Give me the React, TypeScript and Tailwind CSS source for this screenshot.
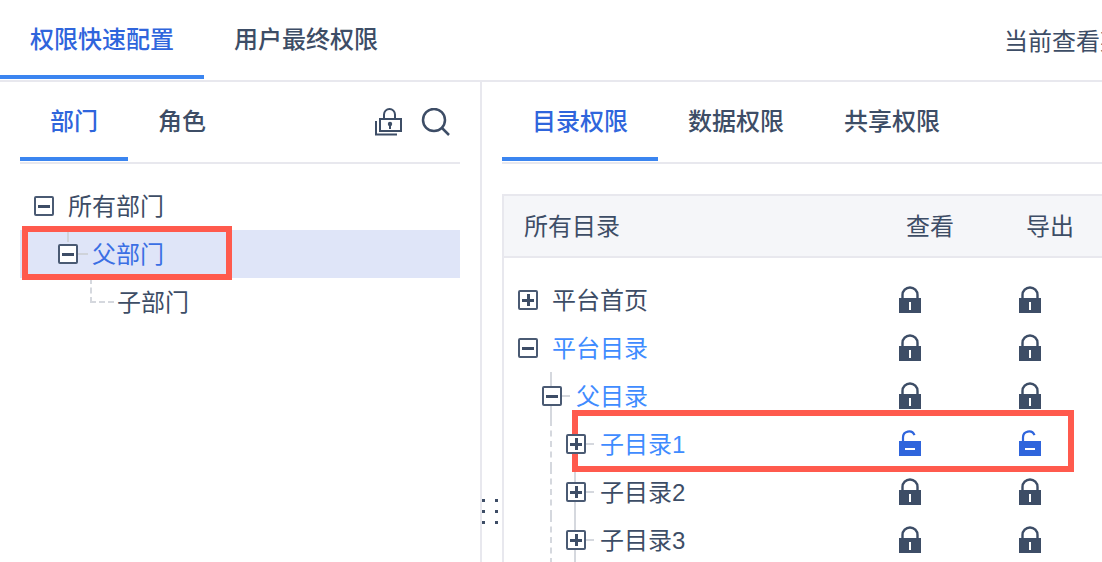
import type { ReactNode } from "react";

const FONT = "font-['Liberation_Sans','Noto_Sans_CJK_SC',sans-serif]";

function ToggleBox({ open }: { open: boolean }) {
  return (
    <span className="relative z-10 flex h-5 w-5 shrink-0 items-center justify-center rounded-[2px] border-2 border-[#4a5a73] bg-white">
      <span className="absolute h-[3px] w-3 bg-[#3d4d66]" />
      {!open && <span className="absolute h-3 w-[3px] bg-[#3d4d66]" />}
    </span>
  );
}

function LockIcon({ open }: { open: boolean }) {
  if (open) {
    return (
      <svg width="22" height="28" viewBox="0 0 22 28" fill="none">
        <path d="M4 12V7.5a6 6 0 0 1 11.5-2.4" stroke="#2f65dc" strokeWidth="2.2" />
        <rect x="0" y="11" width="22" height="15" fill="#2f65dc" />
        <rect x="6" y="18" width="10" height="2" fill="#fff" />
      </svg>
    );
  }
  return (
    <svg width="22" height="28" viewBox="0 0 22 28" fill="none">
      <path d="M3.5 13V9a7.5 7.5 0 0 1 15 0v4" stroke="#3d4d66" strokeWidth="2.4" />
      <rect x="0" y="12" width="22" height="15" fill="#3d4d66" />
      <rect x="10" y="16" width="2" height="8" fill="#fff" />
    </svg>
  );
}

function TabItem({ label, active, width }: { label: string; active?: boolean; width: string }) {
  return (
    <div
      className={`flex h-[79px] shrink-0 items-center justify-center whitespace-nowrap border-b-4 pt-[5px] text-2xl font-medium ${width} ${
        active ? "border-[#3b85f0] text-[#2f65dc]" : "border-transparent text-[#3d4d66]"
      }`}
    >
      {label}
    </div>
  );
}

function DeptRow({
  label,
  indent,
  open,
  className = "",
  children,
}: {
  label: string;
  indent: string;
  open?: boolean;
  className?: string;
  children?: ReactNode;
}) {
  return (
    <div className={`relative flex h-12 items-center text-2xl ${indent} ${className}`}>
      {children}
      {open !== undefined && <ToggleBox open={open} />}
      <span className={`pt-[2px] ${open !== undefined ? "ml-[14px]" : ""}`}>{label}</span>
    </div>
  );
}

const catalog = [
  { label: "平台首页", level: 0, open: false, blue: false, unlocked: false },
  { label: "平台目录", level: 0, open: true, blue: true, unlocked: false },
  { label: "父目录", level: 1, open: true, blue: true, unlocked: false },
  { label: "子目录1", level: 2, open: false, blue: true, unlocked: true },
  { label: "子目录2", level: 2, open: false, blue: false, unlocked: false },
  { label: "子目录3", level: 2, open: false, blue: false, unlocked: false },
];

const catalogIndent = ["pl-[14px]", "pl-[38px]", "pl-[62px]"];

export default function App() {
  return (
    <div className={`relative h-[562px] w-[1102px] overflow-hidden bg-white text-[#3d4d66] ${FONT}`}>
      {/* top tabs */}
      <header className="flex h-[82px] overflow-hidden border-b-2 border-[#e8e8ee]">
        <TabItem label="权限快速配置" active width="w-[204px]" />
        <TabItem label="用户最终权限" width="w-[204px]" />
        <div className="ml-[596px] flex h-[79px] shrink-0 items-center whitespace-nowrap pt-[4px] text-2xl">当前查看某用户</div>
      </header>

      <div className="flex h-[480px]">
        {/* departments */}
        <aside className="w-[482px] shrink-0 border-r-2 border-[#e8e8ee] px-5">
          <div className="flex h-[82px] items-start border-b-2 border-[#e8e8ee]">
            <TabItem label="部门" active width="w-[108px]" />
            <TabItem label="角色" width="w-[108px]" />
            <div className="ml-auto mr-[9px] flex h-[79px] items-center gap-[18px]">
              <svg width="28" height="28" viewBox="0 0 28 28" fill="none" stroke="#3d4d66" strokeWidth="2">
                <path d="M9 11V6.5a5.5 5.5 0 0 1 11 0V11" />
                <rect x="5" y="11" width="21" height="12" />
                <path d="M1 13v13.500h21" />
                <circle cx="15" cy="16" r="2.200" fill="#3d4d66" stroke="none" />
                <path d="M15 17v4" />
              </svg>
              <svg width="30" height="28" viewBox="0 0 30 28" fill="none" stroke="#3d4d66" strokeWidth="2.500">
                <circle cx="13" cy="12" r="11" />
                <path d="M21 20l7 7" />
              </svg>
            </div>
          </div>
          <div className="pt-[18px]">
            <DeptRow label="所有部门" indent="pl-[14px]" open />
            <DeptRow label="父部门" indent="pl-[38px]" open className="bg-[#dfe5f8] text-[#3a6fe4]">
              <span className="absolute left-[47px] top-0 h-3 w-0.5 bg-[#cfd3da]" />
              <span className="absolute left-[58px] top-[23px] h-0.5 w-2.5 bg-[#cfd3da]" />
            </DeptRow>
            <DeptRow label="子部门" indent="pl-[97px]">
              <span className="absolute left-[70px] top-0 h-[25px] border-l-2 border-dashed border-[#d5d8de]" />
              <span className="absolute left-[70px] top-[23px] w-6 border-t-2 border-dashed border-[#d5d8de]" />
            </DeptRow>
          </div>
        </aside>

        {/* permissions */}
        <section className="relative min-w-0 flex-1 overflow-hidden pl-5">
          <div className="flex h-[82px] items-start border-b-2 border-[#e8e8ee]">
            <TabItem label="目录权限" active width="w-[156px]" />
            <TabItem label="数据权限" width="w-[156px]" />
            <TabItem label="共享权限" width="w-[156px]" />
          </div>
          <div className="mt-[30px] w-[640px] border-l-2 border-t-2 border-[#e8e8ee]">
            <div className="flex h-[62px] items-center border-b-2 border-[#e8e8ee] bg-[#f5f6f9] pt-[2px] text-2xl">
              <span className="w-[366px] shrink-0 pl-5">所有目录</span>
              <span className="w-[120px] shrink-0 text-center">查看</span>
              <span className="w-[120px] shrink-0 text-center">导出</span>
            </div>
            <div className="pt-[18px]">
              {catalog.map((row) => (
                <div key={row.label} className="relative flex h-12 items-center text-2xl">
                  {row.level > 0 && (
                    <span
                      className={`absolute left-[46px] top-0 h-full border-l-2 border-[#d5d8de] ${
                        row.level === 2 ? "border-dashed" : ""
                      }`}
                    />
                  )}
                  {row.level === 2 && <span className="absolute left-[70px] top-0 h-full w-0.5 bg-[#d5d8de]" />}
                  <div className={`flex w-[346px] shrink-0 items-center ${catalogIndent[row.level]}`}>
                    <ToggleBox open={row.open} />
                    {row.level > 0 && <span className="relative h-0.5 w-2 bg-[#d5d8de]" />}
                    <span
                      className={`pt-[2px] ${row.level > 0 ? "ml-[6px]" : "ml-[14px]"} ${row.blue ? "text-[#3f8cff]" : ""}`}
                    >
                      {row.label}
                    </span>
                  </div>
                  <div className="flex w-[120px] shrink-0 justify-center">
                    <LockIcon open={row.unlocked} />
                  </div>
                  <div className="flex w-[120px] shrink-0 justify-center">
                    <LockIcon open={row.unlocked} />
                  </div>
                </div>
              ))}
            </div>
          </div>
        </section>
      </div>

      {/* drag handle */}
      <div className="absolute left-[482px] top-[499px] grid grid-cols-[3px_3px] gap-x-[10px] gap-y-2">
        {[0, 1, 2, 3, 4, 5].map((i) => (
          <span key={i} className="h-[3px] w-[3px] bg-[#3d4d66]" />
        ))}
      </div>

      {/* annotation boxes */}
      <div className="absolute left-[22px] top-[226px] h-[54px] w-[210px] border-[6px] border-[#ff5a4d]" />
      <div className="absolute left-[572px] top-[410px] h-[62px] w-[502px] border-[6px] border-[#ff5a4d]" />
    </div>
  );
}
